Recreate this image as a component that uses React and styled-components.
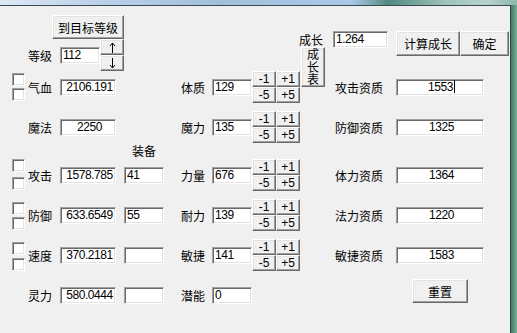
import React from "react";
import styled, { createGlobalStyle } from "styled-components";

const GlobalStyle = createGlobalStyle`
  html, body { margin: 0; padding: 0; }
  body {
    width: 517px;
    height: 333px;
    overflow: hidden;
    background: #5a957f;
    font-family: "Liberation Sans", "Noto Sans CJK SC", sans-serif;
    font-size: 12px;
    color: #000;
  }
`;

const Window = styled.div`
  width: 517px;
  height: 333px;
  display: flex;
  flex-direction: column;
`;

const TitleStrip = styled.div`
  height: 5px;
  flex-shrink: 0;
  background: linear-gradient(
    90deg,
    #dde9f6 0%,
    #bcd2ea 18%,
    #a3bfdc 42%,
    #abc8e6 68%,
    #7aa6ad 72%,
    #4f8a80 75%,
    #9ec3b8 86%,
    #b7d3cc 94%,
    #8db8ab 100%
  );
`;

const Frame = styled.div`
  flex: 1;
  display: flex;
`;

const Client = styled.div`
  width: 510px;
  height: 327px;
  background: #f0f0f0;
  border-top: 1px solid #3b4a52;
  border-right: 1px solid #2f4740;
  display: flex;
  flex-direction: column;
`;

const Edge = styled.div`
  flex: 1;
  background: linear-gradient(90deg, #3f7a66, #5f9d86 60%, #79ae9a);
`;

const Header = styled.div`
  height: 65px;
  flex-shrink: 0;
  display: flex;
  align-items: flex-start;
`;

const HeaderLeft = styled.div`
  margin-left: 28px;
  padding-top: 9px;
  display: flex;
  flex-direction: column;
`;

const HeaderRight = styled.div`
  margin-left: 175px;
  margin-top: 25px;
  display: flex;
  align-items: flex-start;
`;

const LevelRow = styled.div`
  display: flex;
  align-items: center;
`;

const Label = styled.div`
  font-family: "Noto Sans CJK SC", sans-serif;
  font-size: 12px;
  line-height: 17px;
  height: 17px;
  white-space: nowrap;
  width: ${(p) => p.$w || 24}px;
  margin-right: ${(p) => p.$gap || 0}px;
  flex-shrink: 0;
`;

const Button = styled.button`
  box-sizing: border-box;
  width: ${(p) => p.$w}px;
  height: ${(p) => p.$h}px;
  margin: 0;
  padding: 0;
  flex-shrink: 0;
  background: #f0f0f0;
  border: 1px solid;
  border-color: #fff #696969 #696969 #fff;
  box-shadow: inset -1px -1px 0 #a0a0a0, inset 1px 1px 0 #e3e3e3;
  font-family: "Liberation Sans", "Noto Sans CJK SC", sans-serif;
  font-size: 12px;
  color: #000;
  display: flex;
  align-items: center;
  justify-content: center;
`;

const TargetButton = styled(Button)`
  margin-left: 24px;
  font-family: "Noto Sans CJK SC", sans-serif;
`;

const TextButton = styled(Button)`
  font-family: "Noto Sans CJK SC", sans-serif;
`;

const Spinner = styled.div`
  display: flex;
  flex-direction: column;
`;

const Edit = styled.div`
  box-sizing: border-box;
  width: ${(p) => p.$w}px;
  height: 17px;
  flex-shrink: 0;
  background: #fff;
  border: 1px solid;
  border-color: #a0a0a0 #fff #fff #a0a0a0;
  box-shadow: inset 1px 1px 0 #696969, inset -1px -1px 0 #e3e3e3;
  padding: ${(p) => (p.$align === "center" ? "0 0 0 3px" : "0 2px")};
  line-height: 15px;
  letter-spacing: -0.45px;
  text-align: ${(p) => p.$align || "left"};
  white-space: nowrap;
  overflow: hidden;
`;

const Caret = styled.span`
  display: inline-block;
  width: 1px;
  height: 13px;
  background: #000;
  vertical-align: -2px;
  margin-left: 1px;
`;

const Row = styled.div`
  display: flex;
  flex-shrink: 0;
  height: ${(p) => (p.$h ? `${p.$h}px` : "auto")};
  flex-grow: ${(p) => (p.$h ? 0 : 1)};
`;

const LeftCell = styled.div`
  box-sizing: border-box;
  width: 170px;
  padding: 8px 0 0 12px;
  display: grid;
  grid-template-columns: 16px 32px 64px 40px;
  align-content: start;
  align-items: start;
`;

const Checks = styled.div`
  grid-column: 1;
  grid-row: 1;
  display: flex;
  flex-direction: column;
  margin-top: ${(p) => p.$top - 8}px;
  gap: ${(p) => p.$gap}px;
`;

const CheckBox = styled.div`
  box-sizing: border-box;
  width: 13px;
  height: 13px;
  background: #fff;
  border: 1px solid;
  border-color: #a0a0a0 #fff #fff #a0a0a0;
  box-shadow: inset 1px 1px 0 #696969, inset -1px -1px 0 #e3e3e3;
`;

const LeftLabel = styled(Label)`
  grid-column: 2;
  grid-row: 1;
`;

const LeftValue = styled(Edit)`
  grid-column: 3;
  grid-row: 1;
`;

const ExtraValue = styled(Edit)`
  grid-column: 4;
  grid-row: 1;
`;

const Caption = styled(Label)`
  grid-column: 4;
  grid-row: 2;
  width: auto;
  text-align: center;
  margin-top: 6px;
`;

const MidCell = styled.div`
  box-sizing: border-box;
  width: 160px;
  padding: 8px 0 0 11px;
  display: flex;
  align-items: flex-start;
`;

const StepGrid = styled.div`
  margin-top: -8px;
  display: grid;
  grid-template-columns: 24px 24px;
  grid-template-rows: 16px 16px;
`;

const TableButton = styled(TextButton)`
  margin-left: 1px;
  margin-top: -32px;
`;

const VerticalText = styled.span`
  display: block;
  width: 12px;
  word-break: break-all;
  line-height: 12.5px;
  text-align: center;
`;

const RightCell = styled.div`
  flex: 1;
  padding: 8px 0 0 5px;
  display: flex;
  align-items: flex-start;
`;

const ResetButton = styled(TextButton)`
  margin-left: 77px;
  margin-top: -8px;
`;

const Arrow = ({ down }) => (
  <svg width="7" height="11" viewBox="0 0 7 11">
    <g
      stroke="#000"
      strokeWidth="1"
      fill="none"
      transform={down ? "rotate(180 3.5 5.5)" : undefined}
    >
      <line x1="3.5" y1="1" x2="3.5" y2="11" />
      <polyline points="1,4 3.5,1 6,4" />
    </g>
  </svg>
);

const rows = [
  {
    h: 40,
    checks: { top: 2, gap: 2 },
    label: "气血",
    value: "2106.191",
    mid: { label: "体质", value: "129", steps: true, table: true },
    right: { label: "攻击资质", value: "1553", caret: true },
  },
  {
    h: 48,
    label: "魔法",
    value: "2250",
    caption: "装备",
    mid: { label: "魔力", value: "135", steps: true },
    right: { label: "防御资质", value: "1325" },
  },
  {
    h: 40,
    checks: { top: 0, gap: 5 },
    label: "攻击",
    value: "1578.785",
    extra: "41",
    mid: { label: "力量", value: "676", steps: true },
    right: { label: "体力资质", value: "1364" },
  },
  {
    h: 40,
    checks: { top: 3, gap: 2 },
    label: "防御",
    value: "633.6549",
    extra: "55",
    mid: { label: "耐力", value: "139", steps: true },
    right: { label: "法力资质", value: "1220" },
  },
  {
    h: 40,
    checks: { top: 3, gap: 3 },
    label: "速度",
    value: "370.2181",
    extra: "",
    mid: { label: "敏捷", value: "141", steps: true },
    right: { label: "敏捷资质", value: "1583" },
  },
  {
    h: null,
    label: "灵力",
    value: "580.0444",
    extra: "",
    mid: { label: "潜能", value: "0" },
    reset: true,
  },
];

const StatRow = ({ row }) => (
  <Row $h={row.h}>
    <LeftCell>
      {row.checks && (
        <Checks $top={row.checks.top} $gap={row.checks.gap}>
          <CheckBox />
          <CheckBox />
        </Checks>
      )}
      <LeftLabel>{row.label}</LeftLabel>
      <LeftValue $w={56} $align="center">
        {row.value}
      </LeftValue>
      {row.extra !== undefined && <ExtraValue $w={40}>{row.extra}</ExtraValue>}
      {row.caption && <Caption>{row.caption}</Caption>}
    </LeftCell>

    <MidCell>
      <Label $gap={7}>{row.mid.label}</Label>
      <Edit $w={40}>{row.mid.value}</Edit>
      {row.mid.steps && (
        <StepGrid>
          <Button $w={24} $h={16}>-1</Button>
          <Button $w={24} $h={16}>+1</Button>
          <Button $w={24} $h={16}>-5</Button>
          <Button $w={24} $h={16}>+5</Button>
        </StepGrid>
      )}
      {row.mid.table && (
        <TableButton $w={24} $h={40}>
          <VerticalText>成长表</VerticalText>
        </TableButton>
      )}
    </MidCell>

    <RightCell>
      {row.right && (
        <>
          <Label $w={61}>{row.right.label}</Label>
          <Edit $w={88} $align="center">
            {row.right.value}
            {row.right.caret && <Caret />}
          </Edit>
        </>
      )}
      {row.reset && (
        <ResetButton $w={56} $h={24}>
          重置
        </ResetButton>
      )}
    </RightCell>
  </Row>
);

export default function App() {
  return (
    <>
      <GlobalStyle />
      <Window>
        <TitleStrip />
        <Frame>
          <Client>
            <Header>
              <HeaderLeft>
                <TargetButton $w={72} $h={24}>
                  到目标等级
                </TargetButton>
                <LevelRow>
                  <Label $gap={8}>等级</Label>
                  <Edit $w={40}>112</Edit>
                  <Spinner>
                    <Button $w={24} $h={16}>
                      <Arrow />
                    </Button>
                    <Button $w={24} $h={16}>
                      <Arrow down />
                    </Button>
                  </Spinner>
                </LevelRow>
              </HeaderLeft>
              <HeaderRight>
                <Label $gap={10}>成长</Label>
                <Edit $w={55}>1.264</Edit>
                <TextButton $w={64} $h={25} style={{ marginLeft: 8 }}>
                  计算成长
                </TextButton>
                <TextButton $w={49} $h={25}>
                  确定
                </TextButton>
              </HeaderRight>
            </Header>
            {rows.map((row) => (
              <StatRow key={row.label} row={row} />
            ))}
          </Client>
          <Edge />
        </Frame>
      </Window>
    </>
  );
}
